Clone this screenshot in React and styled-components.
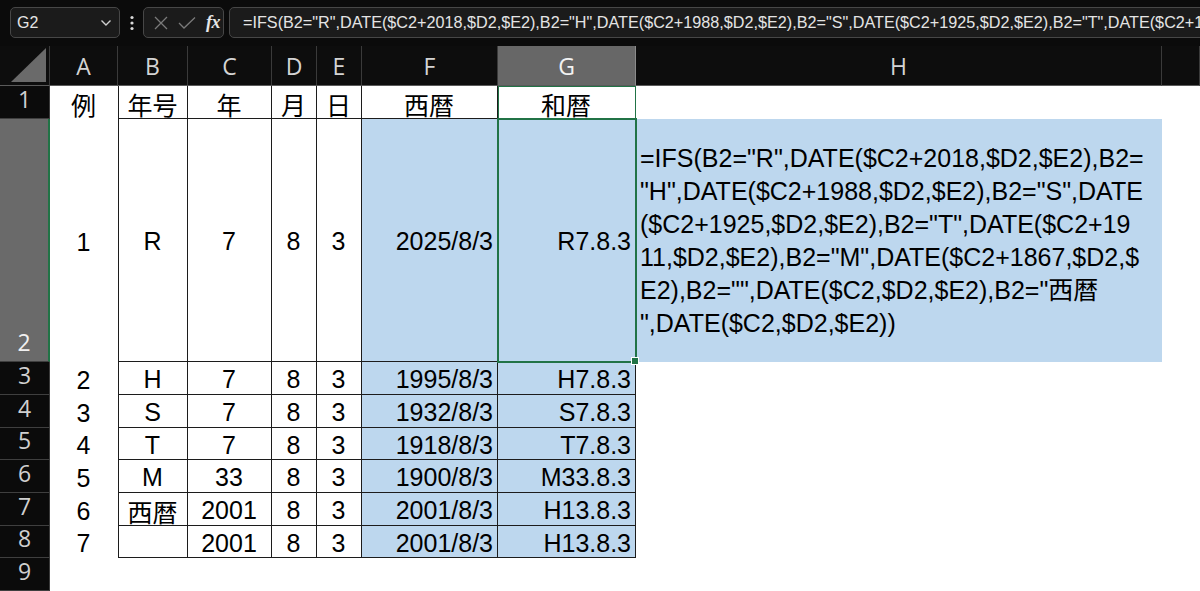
import React from 'react';
import styled, { createGlobalStyle, css } from 'styled-components';

const GlobalStyle = createGlobalStyle`
  html, body { margin: 0; padding: 0; background: #ffffff; }
  body { overflow: hidden; }
  * { box-sizing: border-box; }
`;

const FORMULA =
  '=IFS(B2="R",DATE($C2+2018,$D2,$E2),B2="H",DATE($C2+1988,$D2,$E2),B2="S",DATE($C2+1925,$D2,$E2),B2="T",DATE($C2+1911,$D2,$E2),B2="M",DATE($C2+1867,$D2,$E2),B2="",DATE($C2,$D2,$E2),B2="西暦",DATE($C2,$D2,$E2))';

const WRAPPED = [
  '=IFS(B2="R",DATE($C2+2018,$D2,$E2),B2=',
  '"H",DATE($C2+1988,$D2,$E2),B2="S",DATE',
  '($C2+1925,$D2,$E2),B2="T",DATE($C2+19',
  '11,$D2,$E2),B2="M",DATE($C2+1867,$D2,$',
  'E2),B2="",DATE($C2,$D2,$E2),B2="西暦',
  '",DATE($C2,$D2,$E2))',
];

const COLS = ['A', 'B', 'C', 'D', 'E', 'F', 'G', 'H', ''];
const COL_WIDTHS = '50px 68px 70px 84px 45px 45px 136px 138px 526px 1fr';
const ROW_HEIGHTS = [33, 243, 33, 33, 32, 33, 33, 32, 33];

const DATA = [
  ['例', '年号', '年', '月', '日', '西暦', '和暦'],
  ['1', 'R', '7', '8', '3', '2025/8/3', 'R7.8.3'],
  ['2', 'H', '7', '8', '3', '1995/8/3', 'H7.8.3'],
  ['3', 'S', '7', '8', '3', '1932/8/3', 'S7.8.3'],
  ['4', 'T', '7', '8', '3', '1918/8/3', 'T7.8.3'],
  ['5', 'M', '33', '8', '3', '1900/8/3', 'M33.8.3'],
  ['6', '西暦', '2001', '8', '3', '2001/8/3', 'H13.8.3'],
  ['7', '', '2001', '8', '3', '2001/8/3', 'H13.8.3'],
];

const GREEN = '#217346';

const Frame = styled.div`
  width: 1200px;
  height: 591px;
  overflow: hidden;
  display: flex;
  flex-direction: column;
  background: #ffffff;
`;

/* ---------- formula toolbar ---------- */

const Toolbar = styled.div`
  flex: 0 0 46px;
  background: #0b0b0b;
  display: flex;
  align-items: center;
  padding: 0 0 1px 10px;
  overflow: hidden;
`;

const Field = styled.div`
  height: 31px;
  flex: 0 0 auto;
  background: #1b1b1b;
  border: 1px solid #474747;
  border-radius: 5px;
  display: flex;
  align-items: center;
  color: #e4e4e4;
  font-family: "Liberation Sans", Arial, sans-serif;
  font-size: 16px;
`;

const NameBox = styled(Field)`
  width: 110px;
  justify-content: space-between;
  padding: 0 7px 0 6px;
`;

const Kebab = styled.div`
  width: 23px;
  flex: 0 0 23px;
  display: flex;
  justify-content: center;
  align-items: center;
`;

const FnBox = styled(Field)`
  width: 81px;
  padding-left: 9px;
  gap: 9px;
`;

const FxMark = styled.span`
  font-family: "Liberation Serif", "Times New Roman", serif;
  font-style: italic;
  font-weight: 700;
  font-size: 18px;
  color: #e6e6e6;
  margin-left: 1px;
  letter-spacing: -0.5px;
`;

const FormulaBox = styled(Field)`
  width: 1000px;
  margin-left: 5px;
  padding-left: 13px;
  white-space: nowrap;
  overflow: hidden;
  font-size: 16.2px;
  border-top-right-radius: 0;
  border-bottom-right-radius: 0;
`;

/* ---------- sheet grid ---------- */

const Sheet = styled.div`
  flex: 1 1 auto;
  display: grid;
  grid-template-columns: ${COL_WIDTHS};
  grid-template-rows: 40px ${ROW_HEIGHTS.map((h) => h + 'px').join(' ')};
  background: #ffffff;
`;

const headerText = css`
  font-family: "Open Sans", "Noto Sans", sans-serif;
  font-size: 23px;
  color: #d4d4d4;
`;

const Corner = styled.div`
  background: #0d0d0d;
  border-right: 1px solid #3a3a3a;
  border-bottom: 1px solid #5a5a5a;
  display: flex;
  align-items: flex-end;
  justify-content: flex-end;
  padding: 0 3px 3px 0;
`;

const ColHead = styled.div`
  ${headerText};
  background: ${(p) => (p.$active ? '#676767' : '#0d0d0d')};
  color: ${(p) => (p.$active ? '#f2f2f2' : '#d4d4d4')};
  border-right: 1px solid ${(p) => (p.$active ? '#8a8a8a' : '#3a3a3a')};
  border-bottom: 1px solid #5a5a5a;
  display: flex;
  align-items: center;
  justify-content: center;
`;

const RowHead = styled.div`
  ${headerText};
  background: ${(p) => (p.$active ? '#6a6a6a' : '#0b0b0b')};
  color: ${(p) => (p.$active ? '#f0f0f0' : '#d0d0d0')};
  border-bottom: 1px solid #3f3f3f;
  border-right: ${(p) => (p.$active ? `2px solid ${GREEN}` : '1px solid #3a3a3a')};
  display: flex;
  align-items: flex-end;
  justify-content: center;
  line-height: 24px;
  padding-bottom: 7px;
`;

const Cell = styled.div`
  font-family: "Liberation Sans", Arial, "Noto Sans CJK JP", sans-serif;
  font-size: 25px;
  color: #000000;
  background: ${(p) => (p.$fill ? '#bdd7ee' : '#ffffff')};
  display: flex;
  align-items: center;
  justify-content: ${(p) => (p.$align === 'right' ? 'flex-end' : 'center')};
  padding: 3px 4px 0 3px;
  white-space: nowrap;
  ${(p) =>
    p.$boxed &&
    css`
      border-right: 1px solid #1c1c1c;
      border-bottom: 1px solid #1c1c1c;
    `}
  ${(p) => p.$leftEdge && css`border-left: 1px solid #1c1c1c;`}
  ${(p) =>
    p.$selected &&
    css`
      position: relative;
      z-index: 1;
      outline: ${p.$selected === 'main' ? 2 : 1}px solid ${GREEN};
      outline-offset: -1px;
    `}
  ${(p) =>
    p.$selected === 'main' &&
    css`
      &::after {
        content: '';
        position: absolute;
        right: -4px;
        bottom: -4px;
        width: 6px;
        height: 6px;
        background: ${GREEN};
        border: 1px solid #ffffff;
      }
    `}
`;

const WrapCell = styled.div`
  font-family: "Liberation Sans", Arial, "Noto Sans CJK JP", sans-serif;
  font-size: 25px;
  line-height: 33px;
  color: #000000;
  background: #bdd7ee;
  display: flex;
  flex-direction: column;
  justify-content: center;
  padding: 0 0 0 4px;
  white-space: nowrap;
  overflow: visible;
`;

const WrapLine = styled.span`
  display: block;
`;

const Blank = styled.div`
  background: #ffffff;
`;

/* ---------- small drawings ---------- */

const Chevron = () => (
  <svg width="12" height="8" viewBox="0 0 12 8" fill="none">
    <polyline points="1.5,1.5 6,6 10.5,1.5" stroke="#cfcfcf" strokeWidth="1.4" />
  </svg>
);

const Dots = () => (
  <svg width="4" height="16" viewBox="0 0 4 16">
    <circle cx="2" cy="2.5" r="1.6" fill="#d8d8d8" />
    <circle cx="2" cy="8" r="1.6" fill="#d8d8d8" />
    <circle cx="2" cy="13.5" r="1.6" fill="#d8d8d8" />
  </svg>
);

const Cross = () => (
  <svg width="16" height="16" viewBox="0 0 16 16" fill="none">
    <path d="M2 2 L14 14 M14 2 L2 14" stroke="#7a7a7a" strokeWidth="1.3" />
  </svg>
);

const Check = () => (
  <svg width="18" height="14" viewBox="0 0 18 14" fill="none">
    <polyline points="1,7 6,12 17,1.5" stroke="#7a7a7a" strokeWidth="1.3" />
  </svg>
);

const CornerTriangle = () => (
  <svg width="35" height="34" viewBox="0 0 35 34">
    <polygon points="35,0 35,34 0,34" fill="#6a6a6a" />
  </svg>
);

export default function App() {
  const rowCount = ROW_HEIGHTS.length;

  const renderRow = (r) => {
    const values = DATA[r];
    const rowNo = r + 1;
    const cells = [];
    cells.push(
      <RowHead key={`rh${r}`} $active={rowNo === 2}>
        {rowNo}
      </RowHead>
    );
    if (!values) {
      for (let c = 0; c < 9; c += 1) cells.push(<Blank key={`b${r}-${c}`} />);
      return cells;
    }
    values.forEach((v, c) => {
      const isHeader = r === 0;
      const boxed = c >= 1;
      const fill = !isHeader && c >= 5;
      const align = !isHeader && c >= 5 ? 'right' : 'center';
      let selected;
      if (c === 6 && r === 1) selected = 'main';
      else if (c === 6 && r === 0) selected = 'col';
      cells.push(
        <Cell
          key={`c${r}-${c}`}
          $boxed={boxed}
          $leftEdge={c === 1}
          $fill={fill}
          $align={align}
          $selected={selected}
        >
          {v}
        </Cell>
      );
    });
    if (rowNo === 2) {
      cells.push(
        <WrapCell key="h2">
          {WRAPPED.map((line, i) => (
            <WrapLine key={i}>{line}</WrapLine>
          ))}
        </WrapCell>
      );
    } else {
      cells.push(<Blank key={`h${r}`} />);
    }
    cells.push(<Blank key={`i${r}`} />);
    return cells;
  };

  return (
    <>
      <GlobalStyle />
      <Frame>
        <Toolbar>
          <NameBox>
            <span>G2</span>
            <Chevron />
          </NameBox>
          <Kebab>
            <Dots />
          </Kebab>
          <FnBox>
            <Cross />
            <Check />
            <FxMark>fx</FxMark>
          </FnBox>
          <FormulaBox>{FORMULA}</FormulaBox>
        </Toolbar>
        <Sheet>
          <Corner>
            <CornerTriangle />
          </Corner>
          {COLS.map((c, i) => (
            <ColHead key={`col${i}`} $active={c === 'G'}>
              {c}
            </ColHead>
          ))}
          {Array.from({ length: rowCount }, (_, r) => renderRow(r))}
        </Sheet>
      </Frame>
    </>
  );
}
